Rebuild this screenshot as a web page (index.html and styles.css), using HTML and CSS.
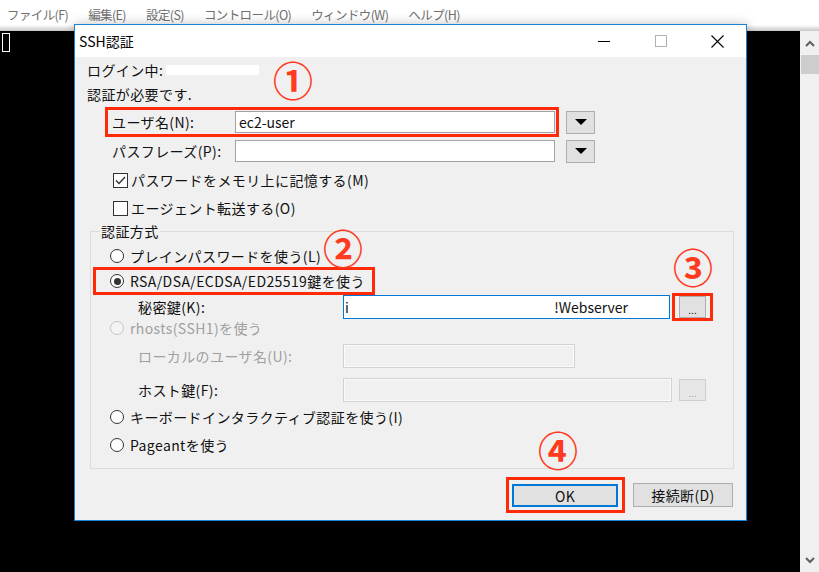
FILE: index.html
```html
<!DOCTYPE html>
<html lang="ja">
<head>
    <meta charset="UTF-8">
    <title>SSH認証</title>
    <link rel="stylesheet" href="styles.css">
</head>
<body>
    <div class="menubar">
        <span>ファイル(F)</span>
        <span>編集(E)</span>
        <span>設定(S)</span>
        <span>コントロール(O)</span>
        <span>ウィンドウ(W)</span>
        <span>ヘルプ(H)</span>
    </div>

    <div class="screen">
        <div class="term"><span class="cursor"></span></div>
        <div class="scrollbar">
            <div class="arrow">
                <svg width="10" height="7"><polyline points="1,6 5,2 9,6" fill="none" stroke="#606060" stroke-width="2"/></svg>
            </div>
            <div class="thumb"></div>
            <div class="spacer"></div>
            <div class="arrow">
                <svg width="10" height="7"><polyline points="1,1 5,5 9,1" fill="none" stroke="#606060" stroke-width="2"/></svg>
            </div>
        </div>
    </div>

    <div class="dialog">
        <div class="titlebar">
            <span class="title">SSH認証</span>
            <div class="winbtns">
                <span class="wb"><svg width="12" height="1"><rect width="12" height="1" fill="#000"/></svg></span>
                <span class="wb"><svg width="12" height="12"><rect x="0.5" y="0.5" width="11" height="11" fill="none" stroke="#b0b0b0"/></svg></span>
                <span class="wb"><svg width="13" height="13"><path d="M0.5 0.5L12.5 12.5M12.5 0.5L0.5 12.5" stroke="#000" stroke-width="1.1"/></svg></span>
            </div>
        </div>

        <div class="dlg-body">
            <div class="line first"><span>ログイン中:</span><span class="redact"></span></div>
            <div class="line">認証が必要です.</div>

            <div class="field-row">
                <div class="field mark">
                    <span class="flabel">ユーザ名(N):</span>
                    <span class="input">ec2-user</span>
                </div>
                <span class="combo"><span class="tri"></span></span>
            </div>
            <div class="field-row">
                <div class="field">
                    <span class="flabel">パスフレーズ(P):</span>
                    <span class="input"></span>
                </div>
                <span class="combo"><span class="tri"></span></span>
            </div>

            <div class="check">
                <span class="box">
                    <svg width="13" height="13"><path d="M2 6.5L5 9.5L11 3" fill="none" stroke="#333" stroke-width="1.4"/></svg>
                </span>
                パスワードをメモリ上に記憶する(M)
            </div>
            <div class="check">
                <span class="box"></span>
                エージェント転送する(O)
            </div>

            <fieldset class="group">
                <legend>認証方式</legend>

                <div class="radio-row r-plain"><span class="radio"></span>プレインパスワードを使う(L)</div>
                <div class="radio-row r-rsa mark"><span class="radio on"></span>RSA/DSA/ECDSA/ED25519鍵を使う</div>

                <div class="sub-row r-key">
                    <span class="slabel">秘密鍵(K):</span>
                    <span class="input key"><span>i</span><span>!Webserver</span></span>
                    <span class="btn-box mark"><span class="dots">...</span></span>
                </div>

                <div class="radio-row r-rhosts off"><span class="radio"></span>rhosts(SSH1)を使う</div>

                <div class="sub-row r-local">
                    <span class="slabel off">ローカルのユーザ名(U):</span>
                    <span class="input dis w-local"></span>
                </div>
                <div class="sub-row r-host">
                    <span class="slabel">ホスト鍵(F):</span>
                    <span class="input dis w-host"></span>
                    <span class="dots dis">...</span>
                </div>

                <div class="radio-row r-kbd"><span class="radio"></span>キーボードインタラクティブ認証を使う(I)</div>
                <div class="radio-row r-agent"><span class="radio"></span>Pageantを使う</div>
            </fieldset>

            <div class="buttons">
                <span class="ok-box mark"><span class="btn ok">OK</span></span>
                <span class="btn">接続断(D)</span>
            </div>
        </div>

        <!-- annotation numbers -->
        <span class="num n1">①</span>
        <span class="num n2">②</span>
        <span class="num n3">③</span>
        <span class="num n4">④</span>
    </div>
</body>
</html>
```

FILE: styles.css
```css
* {
    box-sizing: border-box;
}

body {
    margin: 0;
    width: 819px;
    height: 572px;
    overflow: hidden;
    position: relative;
    background: #000;
    font-family: "Noto Sans CJK JP", "Noto Sans", sans-serif;
}

/* main window */
.menubar {
    height: 31px;
    display: flex;
    gap: 20px;
    padding: 4px 0 0 7px;
    font-size: 12.5px;
    letter-spacing: -0.6px;
    line-height: 22px;
    color: #707070;
    background: linear-gradient(#fff 0, #fff 25px, #e2e2e2 28px, #c8c8c8 31px);
}

.screen {
    display: flex;
    height: 541px;
}

.term {
    flex: 1;
    background: #000;
    padding: 2px 0 0 2px;
}

.cursor {
    display: block;
    width: 8px;
    height: 19px;
    border: 1px solid #fff;
}

.scrollbar {
    width: 19px;
    background: #f0f0f0;
    display: flex;
    flex-direction: column;
}

.arrow {
    height: 24px;
    display: flex;
    align-items: center;
    justify-content: center;
}

.thumb {
    height: 19px;
    margin-left: 1px;
    background: #cdcdcd;
}

.spacer {
    flex: 1;
}

/* dialog */
.dialog {
    position: absolute;
    left: 74px;
    top: 24px;
    width: 673px;
    height: 497px;
    border: 1px solid #1883d7;
    background: #f0f0f0;
    box-shadow: 0 0 10px rgba(0, 0, 0, 0.25);
    display: flex;
    flex-direction: column;
}

.titlebar {
    height: 32px;
    flex-shrink: 0;
    background: #fff;
    display: flex;
    align-items: center;
    padding-left: 4px;
}

.title {
    font-size: 14px;
    flex: 1;
}

.winbtns {
    display: flex;
    height: 32px;
}

.wb {
    width: 57px;
    display: flex;
    align-items: center;
    justify-content: center;
}

.dlg-body {
    flex: 1;
    padding: 0 13px 0 12px;
    font-size: 14px;
    letter-spacing: 0.4px;
    color: #111;
}

.line {
    height: 24px;
    display: flex;
    align-items: center;
}

.line.first {
    height: 25px;
}

.redact {
    display: inline-block;
    width: 93px;
    height: 10px;
    margin-left: 3px;
    background: #fff;
}

.mark {
    border: 3px solid #ff2b08;
}

.field-row {
    display: flex;
    align-items: center;
    gap: 7px;
    margin: 1px 0 0 18px;
}

.field-row + .field-row {
    margin-top: -1px;
}

.field {
    display: flex;
    align-items: center;
    border: 3px solid transparent;
    padding: 1px 1px 1px 4px;
}

.field.mark {
    border-color: #ff2b08;
}

.flabel {
    width: 123px;
}

.input {
    display: flex;
    align-items: center;
    height: 22px;
    width: 320px;
    padding: 0 3px;
    background: #fff;
    border: 1px solid #a2a2a2;
    letter-spacing: 0;
}

.combo {
    width: 29px;
    height: 23px;
    background: #e1e1e1;
    border: 1px solid #adadad;
    display: flex;
    align-items: center;
    justify-content: center;
}

.tri {
    width: 0;
    height: 0;
    border-left: 6px solid transparent;
    border-right: 6px solid transparent;
    border-top: 6px solid #000;
}

.check {
    display: flex;
    align-items: center;
    gap: 3px;
    height: 28px;
    margin-left: 26px;
}

.box {
    width: 15px;
    height: 15px;
    background: #fff;
    border: 1px solid #333;
    display: flex;
    align-items: center;
    justify-content: center;
}

/* group box */
.group {
    margin: 0 0 0 3px;
    width: 644px;
    border: 1px solid #dcdcdc;
    padding: 0 0 11px 0;
}

.group legend {
    margin-left: 9px;
    padding: 0 1px;
    line-height: 18px;
}

.radio-row {
    display: flex;
    align-items: center;
    gap: 6px;
    margin-left: 19px;
    height: 24px;
}

.radio {
    width: 14px;
    height: 14px;
    border-radius: 50%;
    border: 1px solid #333;
    background: #fff;
    display: flex;
    align-items: center;
    justify-content: center;
}

.radio.on::after {
    content: "";
    width: 7px;
    height: 7px;
    border-radius: 50%;
    background: #333;
}

.r-plain {
    margin-top: 4px;
    height: 23px;
}

.r-rsa {
    margin-left: 2px;
    width: 282px;
    height: 28px;
    padding-left: 14px;
}

.r-rhosts {
    height: 18px;
}

.off {
    color: #a0a0a0;
}

.r-rhosts .radio {
    border-color: #c4c4c4;
    background: #f4f4f4;
}

.r-kbd {
    margin-top: 3px;
}

.r-agent {
    margin-top: 4px;
}

.sub-row {
    display: flex;
    align-items: center;
    height: 24px;
    margin-left: 47px;
}

.slabel {
    width: 205px;
}

.input.key {
    width: 327px;
    height: 24px;
    border-color: #0078d7;
    justify-content: space-between;
    padding: 0 41px 0 1px;
}

.btn-box {
    margin-left: 2px;
    padding: 0 4px;
}

.dots {
    width: 27px;
    height: 22px;
    background: #e1e1e1;
    border: 1px solid #adadad;
    display: flex;
    align-items: flex-end;
    justify-content: center;
    font-size: 10px;
    line-height: 14px;
    letter-spacing: 0;
}

.dots.dis {
    margin-left: 7px;
    background: #e6e6e6;
    border-color: #cfcfcf;
    color: #a8a8a8;
}

.input.dis {
    height: 24px;
    background: #f0f0f0;
    border-color: #d2d2d2;
    box-shadow: inset 0 0 0 1px #fbfbfb;
}

.w-local {
    width: 232px;
}

.w-host {
    width: 329px;
}

.r-local {
    margin-top: 7px;
}

.r-host {
    margin-top: 10px;
}

/* bottom buttons */
.buttons {
    display: flex;
    justify-content: flex-end;
    align-items: center;
    gap: 8px;
    height: 24px;
    margin-top: 14px;
}

.ok-box {
    padding: 4px 4px 3px 3px;
}

.btn {
    width: 100px;
    height: 24px;
    background: #e1e1e1;
    border: 1px solid #adadad;
    display: flex;
    align-items: center;
    justify-content: center;
}

.btn.ok {
    width: 106px;
    height: 23px;
    border: 2px solid #0078d7;
}

/* red annotation numbers */
.num {
    position: absolute;
    width: 44px;
    height: 44px;
    line-height: 44px;
    text-align: center;
    font-size: 40px;
    font-weight: 700;
    color: #ff3b1f;
}

.n1 { left: 196px; top: 32px; }
.n2 { left: 246px; top: 200px; }
.n3 { left: 596px; top: 219px; }
.n4 { left: 461px; top: 402px; }
```
